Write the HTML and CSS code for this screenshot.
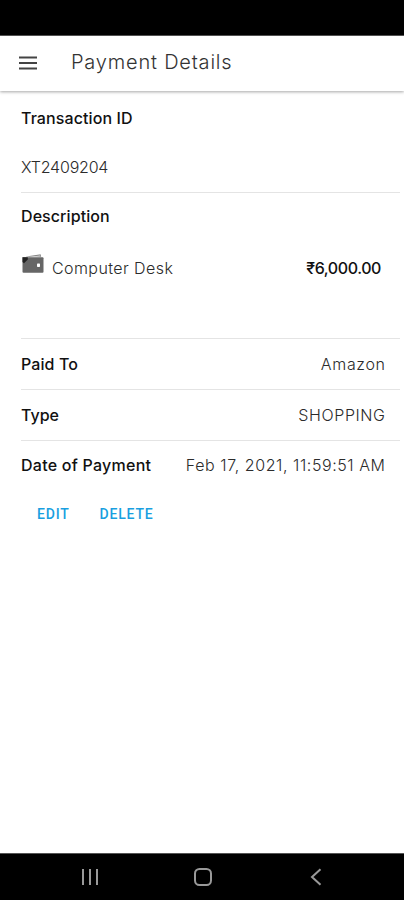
FILE: index.html
```html
<!DOCTYPE html>
<html lang="en">
<head>
<meta charset="utf-8">
<title>Payment Details</title>
<link rel="stylesheet" href="styles.css">
</head>
<body>
<div class="screen">
  <div class="status-bar"></div>
  <header class="toolbar">
    <svg class="menu-icon" width="18" height="14" viewBox="0 0 18 14"><path d="M0 1.500h18M0 7h18M0 12.500h18"/></svg>
    <h1 class="title">Payment Details</h1>
  </header>
  <main class="details">
    <section class="item transaction">
      <h2 class="label t-id">Transaction ID</h2>
      <p class="value t-num">XT2409204</p>
    </section>
    <section class="item description">
      <h2 class="label t-desc">Description</h2>
      <div class="product">
        <svg class="wallet" width="22" height="20" viewBox="0 0 22 20">
          <path fill="#888" d="M4 2.600 18.600.3l.6 2.500H4z"/>
          <path fill="#ddd" d="M6 3.300 18 1.600v.7L7 3.700z"/>
          <path fill="#666" d="M.5 3.300h20q1 0 1 1v13.500q0 1-1 1h-19q-1 0-1-1z"/>
          <path fill="#222" d="M.5 3.300h5.300v2.200L2 9.300.5 8z"/>
          <rect fill="#fff" x="15" y="9.500" width="3" height="3.500" rx=".7"/>
        </svg>
        <span class="value t-product">Computer Desk</span>
        <strong class="label amount">₹6,000.00</strong>
      </div>
    </section>
    <div class="item row"><span class="label t-paid">Paid To</span><span class="value t-amazon">Amazon</span></div>
    <div class="item row"><span class="label t-type">Type</span><span class="value t-shop">SHOPPING</span></div>
    <div class="item row last"><span class="label t-date">Date of Payment</span><span class="value t-time">Feb 17, 2021, 11:59:51 AM</span></div>
    <div class="actions"><button class="action edit">EDIT</button><button class="action delete">DELETE</button></div>
  </main>
  <nav class="nav-bar">
    <svg width="18" height="18" viewBox="0 0 18 18"><path d="M2 1v16M9 1v16M16 1v16"/></svg>
    <svg width="20" height="20" viewBox="0 0 20 20"><rect x="2" y="2" width="16" height="16" rx="4.500"/></svg>
    <svg width="12" height="18" viewBox="0 0 12 18"><path d="M10.500 1.200 2 9l8.500 7.800"/></svg>
  </nav>
</div>
</body>
</html>
```
FILE: styles.css
```css
* { box-sizing: border-box; }
body { margin: 0; background: #fff; font-family: Inter, "Noto Sans", sans-serif; }
h1, h2, p { margin: 0; }
.screen { width: 404px; height: 900px; display: flex; flex-direction: column; overflow: hidden; }
.status-bar { height: 36px; background: #000; border-bottom: 1px solid #555; flex: none; }
.toolbar { height: 55px; flex: none; display: flex; align-items: center; padding: 0 0 2px 19px; gap: 34px; box-shadow: 0 1px 3px rgba(0, 0, 0, .35); }
.menu-icon { stroke: #444; stroke-width: 1.9; }
.title { margin-top: -2px; font-size: 20px; line-height: 28px; font-weight: 300; color: #333; letter-spacing: .8px; }
.details { flex: 1; padding: 1px 4px 0 21px; }
.item { border-bottom: 1px solid #e4e4e4; }
.label, .value { font-size: 16px; line-height: 24px; white-space: nowrap; }
.label { font-weight: 500; color: #111; }
.value { font-weight: 300; color: #2b2b2b; }
.transaction { height: 101px; padding-top: 14px; }
.transaction .value { margin-top: 25px; }
.description { height: 146px; padding-top: 11px; }
.product { display: flex; align-items: center; margin-top: 28px; padding-right: 19px; }
.wallet { margin: -8px 8px 0 1px; }
.amount { margin-left: auto; letter-spacing: -.42px; }
.t-id { letter-spacing: .1px; }
.t-num { letter-spacing: -.2px; }
.t-desc { letter-spacing: .08px; }
.t-product { letter-spacing: .42px; }
.t-amazon { letter-spacing: .65px; margin-right: -.65px; }
.t-shop { letter-spacing: .6px; margin-right: -.6px; }
.t-paid { letter-spacing: .1px; }
.t-date { letter-spacing: .25px; }
.t-time { letter-spacing: .57px; margin-right: -.57px; }
.row { height: 51px; display: flex; align-items: center; justify-content: space-between; padding-right: 15px; }
.last { border-bottom: 0; height: 49px; padding-bottom: 2px; }
.actions { display: flex; gap: 30px; padding: 12px 0 0 16px; }
.action { border: 0; background: none; padding: 0; font: 500 14px/24px Roboto, sans-serif; color: #1a9fe0; letter-spacing: .8px; }
.nav-bar { height: 47px; flex: none; background: #000; border-top: 1px solid #555; display: grid; grid-template-columns: repeat(3, 113px); align-items: center; padding: 0 0 0 33.5px; justify-items: center; }
.nav-bar svg { fill: none; stroke: #999; stroke-width: 2; }
```
